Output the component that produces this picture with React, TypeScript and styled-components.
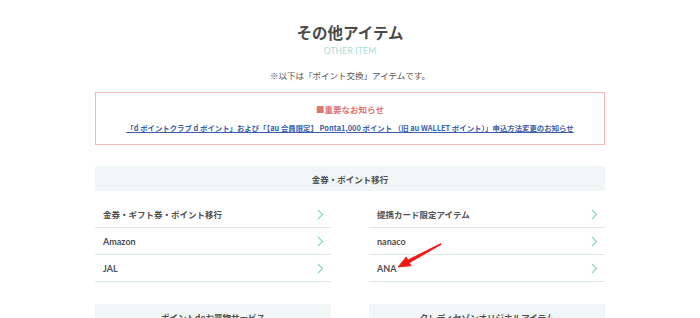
import React from "react";
import styled, { createGlobalStyle } from "styled-components";

const GlobalStyle = createGlobalStyle`
  body {
    margin: 0;
    background: #fff;
    font-family: "Noto Sans CJK JP", "Noto Sans", sans-serif;
    color: #555;
  }
`;

const Page = styled.div`
  width: 510px;
  margin: 0 auto;
  padding-top: 21px;
`;

const Heading = styled.h2`
  margin: 0;
  text-align: center;
  font-size: 15.5px;
  line-height: 23px;
  font-weight: 700;
  color: #4a4a4a;
`;

const SubHeading = styled.p`
  margin: 2px 0 0;
  text-align: center;
  font-family: "Lato", "Noto Sans", sans-serif;
  font-size: 8.5px;
  line-height: 11px;
  letter-spacing: 0.2px;
  color: #a3ddd4;
`;

const Lead = styled.p`
  margin: 12px 0 0;
  text-align: center;
  font-size: 8.5px;
  line-height: 13px;
  color: #555;
`;

const Notice = styled.div`
  margin-top: 10px;
  height: 53px;
  box-sizing: border-box;
  border: 1px solid #f2b9b9;
  display: flex;
  flex-direction: column;
  align-items: center;
  justify-content: center;
  gap: 7px;
`;

const NoticeTitle = styled.p`
  margin: 0;
  font-size: 8.5px;
  line-height: 11px;
  font-weight: 700;
  color: #e07474;
`;

const NoticeLink = styled.a`
  font-size: 7.4px;
  line-height: 11px;
  font-weight: 700;
  color: #3a5ea8;
  text-decoration: underline;
  cursor: pointer;
`;

const SectionBar = styled.div`
  background: #f1f7f6;
  height: 25px;
  display: flex;
  align-items: center;
  justify-content: center;
  font-size: 8.5px;
  font-weight: 700;
  color: #4f4f4f;
`;

const Section = styled.section<{ $top: number }>`
  margin-top: ${(p) => p.$top}px;
`;

const Columns = styled.div<{ $top?: number }>`
  display: grid;
  grid-template-columns: 236px 236px;
  column-gap: 38px;
  margin-top: ${(p) => p.$top ?? 0}px;
`;

const List = styled.ul`
  list-style: none;
  margin: 0;
  padding: 0;
`;

const Row = styled.li`
  height: 27px;
  box-sizing: border-box;
  border-bottom: 1px solid #dce8e6;
  display: flex;
  align-items: center;
  justify-content: space-between;
  padding: 0 7px 0 8px;
  font-weight: 700;
  color: #4f4f4f;
  position: relative;
`;

const Label = styled.span<{ $latin?: boolean }>`
  font-size: ${(p) => (p.$latin ? 9 : 8.5)}px;
  font-family: ${(p) =>
    p.$latin ? `"Lato", "Noto Sans", sans-serif` : `"Noto Sans CJK JP", sans-serif`};
`;

const Chevron = () => (
  <svg width="7" height="11" viewBox="0 0 7 11" fill="none">
    <path d="M1 1 L5.5 5.5 L1 10" stroke="#8fd3c8" strokeWidth="1.2" />
  </svg>
);

const Arrow = styled.svg`
  position: absolute;
  left: 27px;
  top: -13px;
  overflow: visible;
  pointer-events: none;
`;

const RedArrow = () => (
  <Arrow width="47" height="27" viewBox="0 0 47 27">
    <path
      d="M2 25 L10.2 14.9 L11.9 18 L44.8 1.6 L45.2 2.4 L13.3 20.7 L15 23.8 Z"
      fill="#f01616"
      stroke="#f01616"
      strokeWidth="0.8"
      strokeLinejoin="round"
    />
  </Arrow>
);

type Item = { label: string; latin?: boolean; arrow?: boolean };

const left: Item[] = [
  { label: "金券・ギフト券・ポイント移行" },
  { label: "Amazon", latin: true },
  { label: "JAL", latin: true },
];

const right: Item[] = [
  { label: "提携カード限定アイテム" },
  { label: "nanaco", latin: true },
  { label: "ANA", latin: true, arrow: true },
];

const ItemList = ({ items }: { items: Item[] }) => (
  <List>
    {items.map((it) => (
      <Row key={it.label}>
        <Label $latin={it.latin}>{it.label}</Label>
        {it.arrow && <RedArrow />}
        <Chevron />
      </Row>
    ))}
  </List>
);

export default function App() {
  return (
    <>
      <GlobalStyle />
      <Page>
        <Heading>その他アイテム</Heading>
        <SubHeading>OTHER ITEM</SubHeading>
        <Lead>※以下は「ポイント交換」アイテムです。</Lead>
        <Notice>
          <NoticeTitle>■重要なお知らせ</NoticeTitle>
          <NoticeLink>
            「d ポイントクラブ d ポイント」および「【au 会員限定】 Ponta1,000 ポイント （旧 au WALLET ポイント）」申込方法変更のお知らせ
          </NoticeLink>
        </Notice>
        <Section $top={21}>
          <SectionBar>金券・ポイント移行</SectionBar>
          <Columns $top={10}>
            <ItemList items={left} />
            <ItemList items={right} />
          </Columns>
        </Section>
        <Section $top={22}>
          <Columns>
            <SectionBar>ポイントdeお買物サービス</SectionBar>
            <SectionBar>クレディセゾンオリジナルアイテム</SectionBar>
          </Columns>
        </Section>
      </Page>
    </>
  );
}
